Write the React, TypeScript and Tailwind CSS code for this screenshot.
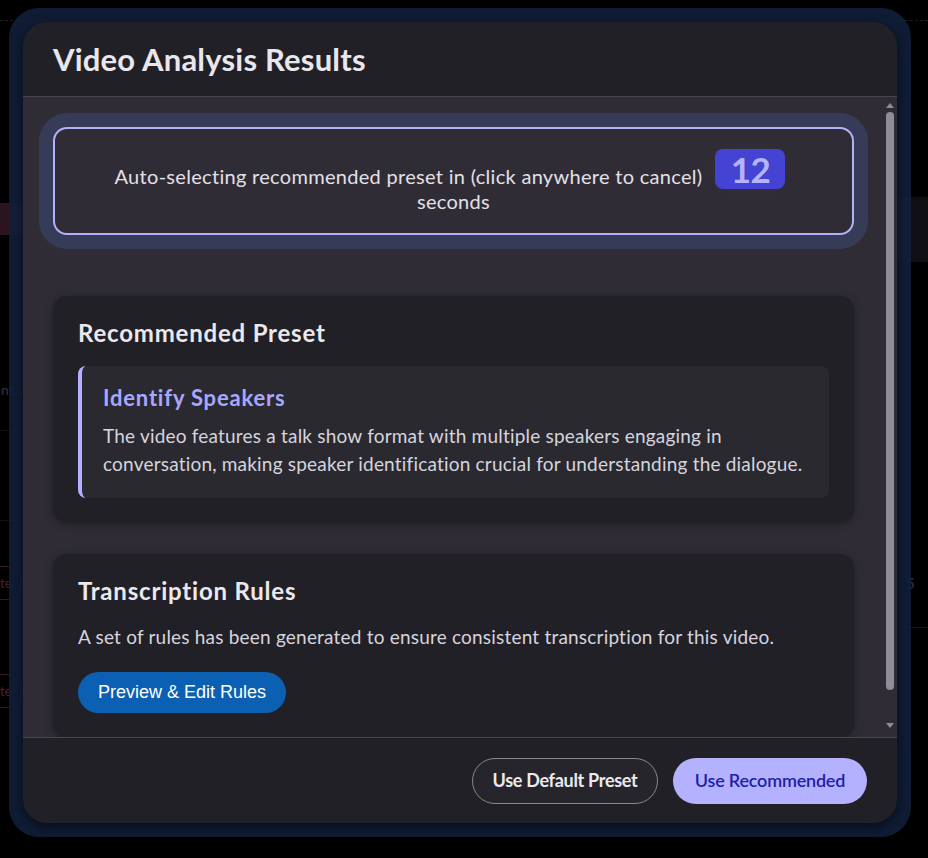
import React from 'react';

const font = { fontFamily: 'Lato, "Noto Sans", sans-serif' };

const Scrollbar: React.FC = () => (
  <div className="w-[15px] flex flex-col items-center shrink-0">
    {/* flecha arriba */}
    <div className="h-[11px] flex items-end justify-center">
      <div className="w-0 h-0 border-l-[4px] border-r-[4px] border-b-[5px] border-l-transparent border-r-transparent border-b-[#8f8c97]" />
    </div>
    <div className="flex-1 w-full flex justify-center pt-[4px] pb-[33px]">
      <div className="w-[8px] h-full rounded-full bg-[#8f8c97]" />
    </div>
    <div className="h-[14px] flex items-start justify-center">
      <div className="w-0 h-0 border-l-[4px] border-r-[4px] border-t-[5px] border-l-transparent border-r-transparent border-t-[#8f8c97]" />
    </div>
  </div>
);

const App: React.FC = () => {
  return (
    <div className="relative w-[928px] h-[858px] bg-black overflow-hidden" style={font}>
      {/* restos de la pagina de fondo, tapados por el overlay */}
      <div className="absolute left-0 top-[20px] w-full border-t border-dashed border-[#1a1d27]" />
      <div className="absolute left-0 top-[203px] w-[40px] h-[32px] bg-[#2c1320]" />
      <div className="absolute left-[880px] top-[197px] w-[48px] h-[65px] bg-[#0e0e13]" />
      <div className="absolute left-[1px] top-[379px] text-[14px] text-[#34343e]">nt...</div>
      <div className="absolute left-0 top-[430px] w-[40px] border-t border-[#111116]" />
      <div className="absolute left-0 top-[520px] w-[40px] border-t border-[#111116]" />
      <div className="absolute left-[-30px] top-[566px] w-[53px] h-[34px] rounded-full border border-[#3a1c27] text-[13px] leading-[32px] text-[#4a2232] pl-[29px]">te</div>
      <div className="absolute left-[-30px] top-[674px] w-[53px] h-[34px] rounded-full border border-[#3a1c27] text-[13px] leading-[32px] text-[#4a2232] pl-[29px]">te</div>
      <div className="absolute left-[906px] top-[572px] text-[15px] font-bold text-[#272b38]">5</div>
      <div className="absolute left-[898px] top-[627px] w-[30px] border-t border-[#15151b]" />

      {/* marco del modal */}
      <div className="relative ml-[9px] mt-[8px] w-[902px] h-[829px] rounded-[30px] bg-[#12213d]/85 p-[14px]">
        <div className="w-full h-full rounded-[24px] bg-[#212026] flex flex-col overflow-hidden shadow-[0_4px_12px_rgba(0,0,0,0.5)]">
          {/* Encabezado */}
          <div className="h-[75px] shrink-0 flex items-center px-[30px] border-b border-[#47454d]">
            <h1 className="text-[31px] font-bold text-[#e9e6ec] tracking-[0.2px] leading-[36px]">Video Analysis Results</h1>
          </div>

          {/* Cuerpo con scroll */}
          <div className="flex-1 flex bg-[#2f2c35] overflow-hidden">
            <div className="flex-1 overflow-hidden pl-[30px] pr-[28px] pt-[30px]">
              {/* cuenta regresiva */}
              <div className="rounded-[14px] border-2 border-[#b3b1f7] bg-[#2f2c35] shadow-[0_0_0_14px_#363c57] h-[108px] flex items-center justify-center px-[40px]">
                <p className="text-center text-[20px] leading-[25px] tracking-[0.3px] text-[#e3e0e8]">
                  Auto-selecting recommended preset in (click anywhere to cancel)
                  <span className="inline-block align-[1px] ml-[13px] mr-[7px] rounded-[8px] bg-[#4443d4] w-[70px] text-center h-[40px] leading-[40px] text-[35px] font-bold tracking-[-0.5px] text-[#b5b3ff] shadow-[0_0_16px_rgba(255,255,255,0.03)]">
                    12
                  </span>
                  seconds
                </p>
              </div>

              {/* Preset recomendado */}
              <div className="mt-[61px] rounded-[14px] bg-[#212026] shadow-[0_2px_8px_rgba(0,0,0,0.35)] px-[25px] pt-[22px] pb-[24px]">
                <h2 className="text-[24px] font-bold text-[#ebe8ee] leading-[30px] tracking-[0.8px]">Recommended Preset</h2>
                <div className="mt-[18px] rounded-[8px] border-l-4 border-[#b3b1ff] bg-[#2a2930] pl-[21px] pr-[20px] pt-[18px] pb-[20px]">
                  <h3 className="text-[22px] font-bold text-[#a9a7ff] leading-[28px] tracking-[0.8px]">Identify Speakers</h3>
                  <p className="mt-[10px] text-[19px] leading-[28px] tracking-[0.2px] text-[#d6d4de]">
                    The video features a talk show format with multiple speakers engaging in conversation, making speaker identification crucial for understanding the dialogue.
                  </p>
                </div>
              </div>

              {/* Reglas de transcripcion */}
              <div className="mt-[32px] rounded-[14px] bg-[#212026] shadow-[0_2px_8px_rgba(0,0,0,0.35)] px-[25px] pt-[22px] pb-[24px] mb-[30px]">
                <h2 className="text-[24px] font-bold text-[#ebe8ee] leading-[30px] tracking-[0.8px]">Transcription Rules</h2>
                <p className="mt-[17px] text-[19px] leading-[28px] tracking-[0.2px] text-[#d6d4de]">
                  A set of rules has been generated to ensure consistent transcription for this video.
                </p>
                <button
                  className="mt-[21px] h-[41px] w-[208px] rounded-full bg-[#0c60b4] text-white text-[18px]"
                  style={{ fontFamily: '"Liberation Sans", Arial, sans-serif' }}
                >
                  Preview &amp; Edit Rules
                </button>
              </div>
            </div>
            <Scrollbar />
          </div>

          {/* Pie */}
          <div className="h-[86px] shrink-0 border-t border-[#47454d] flex items-center justify-end gap-[15px] pr-[30px]">
            <button className="h-[46px] w-[186px] rounded-full border border-[#8a888f] bg-[#26252b] text-[18px] font-bold text-[#ebe9ee] tracking-[-0.3px]">
              Use Default Preset
            </button>
            <button className="h-[46px] w-[194px] rounded-full bg-[#b4b2ff] text-[18px] font-semibold text-[#2020a8] tracking-[-0.2px]">
              Use Recommended
            </button>
          </div>
        </div>
      </div>
    </div>
  );
};

export default App;
